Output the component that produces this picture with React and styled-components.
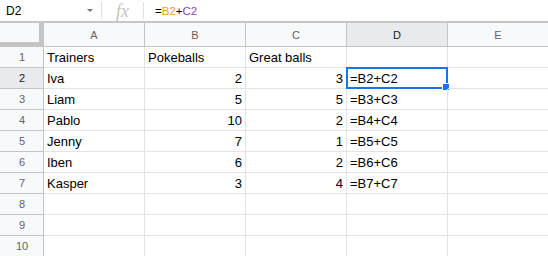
import React from "react";
import styled, { createGlobalStyle } from "styled-components";

const GlobalStyle = createGlobalStyle`
  html, body {
    margin: 0;
    padding: 0;
    background: #ffffff;
    font-family: "Liberation Sans", Arial, sans-serif;
  }
`;

const Page = styled.div`
  width: 548px;
  height: 256px;
  overflow: hidden;
  background: #ffffff;
`;

const FormulaBar = styled.div`
  display: flex;
  align-items: center;
  height: 21px;
  border-bottom: 2px solid #c6c6c6;
`;

const NameBox = styled.div`
  display: flex;
  align-items: center;
  justify-content: space-between;
  width: 101px;
  height: 100%;
  padding: 0 8px 0 6px;
  box-sizing: border-box;
  font-size: 12px;
  color: #000;
`;

const Caret = styled.span`
  width: 0;
  height: 0;
  border-left: 3px solid transparent;
  border-right: 3px solid transparent;
  border-top: 3px solid #757575;
`;

const Divider = styled.div`
  width: 1px;
  height: 17px;
  background: #e0e0e0;
`;

const FxBox = styled.div`
  display: flex;
  align-items: center;
  justify-content: center;
  width: 41px;
  height: 100%;
  font-family: "Liberation Serif", "Times New Roman", serif;
  font-style: italic;
  font-size: 18px;
  line-height: 18px;
  color: #c4c4c4;
`;

const Formula = styled.div`
  padding-left: 11px;
  font-size: 11.5px;
  color: #000;
`;

const Ref = styled.span`
  color: ${(p) => p.$color};
`;

const Grid = styled.div`
  display: grid;
  grid-template-columns: 44px repeat(5, 101px);
  grid-template-rows: 24px repeat(10, 21px);
`;

const Corner = styled.div`
  background: #f8f9fa;
  border-right: 5px solid #c4c4c4;
  border-bottom: 5px solid #c4c4c4;
`;

const ColHeader = styled.div`
  display: flex;
  align-items: center;
  justify-content: center;
  background: ${(p) => (p.$active ? "#e8eaed" : "#f8f9fa")};
  color: ${(p) => (p.$active ? "#202124" : "#5f6368")};
  font-size: 11px;
  border-right: 1px solid #c4c4c4;
  border-bottom: 1px solid #c4c4c4;
  padding-top: 1px;
`;

const RowHeader = styled.div`
  display: flex;
  align-items: center;
  justify-content: center;
  background: ${(p) => (p.$active ? "#e8eaed" : "#f8f9fa")};
  color: ${(p) => (p.$active ? "#202124" : "#5f6368")};
  font-size: 11px;
  border-right: 1px solid #c4c4c4;
  border-bottom: 1px solid #c4c4c4;
  padding-left: 1px;
`;

const Cell = styled.div`
  position: relative;
  display: flex;
  align-items: center;
  justify-content: ${(p) => (p.$num ? "flex-end" : "flex-start")};
  padding: 1px 3px 0 3px;
  font-size: 13px;
  line-height: 20px;
  color: #000;
  white-space: nowrap;
  border-right: 1px solid #e2e3e3;
  border-bottom: 1px solid #e2e3e3;
`;

const Selection = styled.div`
  position: absolute;
  inset: -1px;
  border: 2px solid #1a73e8;
  pointer-events: none;
`;

const Handle = styled.div`
  position: absolute;
  right: -3px;
  bottom: -3px;
  width: 6px;
  height: 6px;
  background: #1a73e8;
  border-left: 1px solid #ffffff;
  border-top: 1px solid #ffffff;
`;

const columns = ["A", "B", "C", "D", "E"];

const rows = [
  ["Trainers", "Pokeballs", "Great balls", "", ""],
  ["Iva", 2, 3, "=B2+C2", ""],
  ["Liam", 5, 5, "=B3+C3", ""],
  ["Pablo", 10, 2, "=B4+C4", ""],
  ["Jenny", 7, 1, "=B5+C5", ""],
  ["Iben", 6, 2, "=B6+C6", ""],
  ["Kasper", 3, 4, "=B7+C7", ""],
  ["", "", "", "", ""],
  ["", "", "", "", ""],
  ["", "", "", "", ""],
];

const App = () => {
  return (
    <Page>
      <GlobalStyle />
      <FormulaBar>
        <NameBox>
          <span>D2</span>
          <Caret />
        </NameBox>
        <Divider />
        <FxBox>fx</FxBox>
        <Divider />
        <Formula>
          =<Ref $color="#f29a1f">B2</Ref>+<Ref $color="#8e44ad">C2</Ref>
        </Formula>
      </FormulaBar>
      <Grid>
        <Corner />
        {columns.map((c) => (
          <ColHeader key={c} $active={c === "D"}>
            {c}
          </ColHeader>
        ))}
        {rows.map((row, r) => (
          <React.Fragment key={r}>
            <RowHeader $active={r === 1}>{r + 1}</RowHeader>
            {row.map((v, c) => (
              <Cell key={c} $num={typeof v === "number"}>
                {v}
                {r === 1 && c === 3 && (
                  <Selection>
                    <Handle />
                  </Selection>
                )}
              </Cell>
            ))}
          </React.Fragment>
        ))}
      </Grid>
    </Page>
  );
};

export default App;
